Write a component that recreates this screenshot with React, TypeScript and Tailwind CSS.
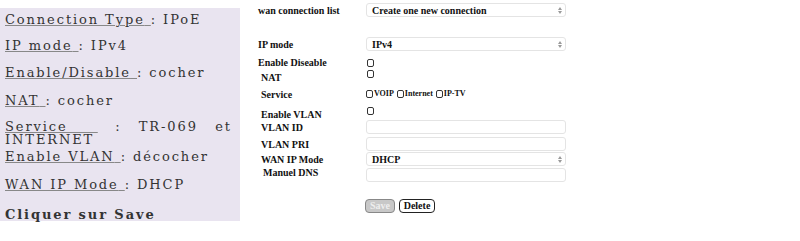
import React from "react";

const Arrow = () => (
  <svg width="4" height="7" viewBox="0 0 4 7" className="shrink-0">
    <path d="M0 3 L2 0 L4 3 Z M0 4 L2 7 L4 4 Z" fill="#999" />
  </svg>
);

const Select: React.FC<{ value: string }> = ({ value }) => (
  <div className="w-[200px] h-[14px] flex items-center justify-between pl-[5px] pr-[3px] border border-[#e4e4e4] rounded-[3px] bg-white text-[10px] font-bold text-[#111]">
    <span>{value}</span>
    <Arrow />
  </div>
);

const TextBox = () => (
  <div className="w-[200px] h-[14px] border border-[#e4e4e4] rounded-[3px] bg-white" />
);

const Box = () => (
  <span className="inline-block w-[7px] h-[8px] border border-[#333] rounded-[2px] bg-white" />
);

const Row: React.FC<{
  label: string;
  h: string;
  indent?: boolean;
  labelClass?: string;
  children?: React.ReactNode;
}> = ({ label, h, indent, labelClass = "", children }) => (
  <div className={`flex items-center ${h}`}>
    <div
      className={`w-[108px] text-[10px] font-bold text-[#111] ${indent ? "pl-[3px]" : ""} ${labelClass}`}
    >
      {label}
    </div>
    <div className="flex items-center">{children}</div>
  </div>
);

const Help: React.FC<{ label: string; value: string; mt: string }> = ({ label, value, mt }) => (
  <p className={`leading-[13px] ${mt}`}>
    <span className="underline decoration-[#888] whitespace-pre">{label} </span>
    <span>: {value}</span>
  </p>
);

export default function App() {
  return (
    <div className="w-[800px] h-[241px] bg-white flex font-['Liberation_Serif','Times_New_Roman',serif]">
      <div className="w-[240px] h-[213px] mt-[8px] bg-[#e9e4f0] pl-[5px] pr-[8px] pt-[4px] text-[13px] text-[#333] tracking-[1.9px] font-['DejaVu_Serif',serif]">
        <Help label="Connection Type" value="IPoE" mt="mt-[1px]" />
        <Help label="IP mode" value="IPv4" mt="mt-[13px]" />
        <Help label="Enable/Disable" value="cocher" mt="mt-[14px]" />
        <Help label="NAT" value="cocher" mt="mt-[15px]" />
        <div className="leading-[13px] mt-[13px]">
          <div className="flex justify-between">
            <span className="underline underline-offset-[1px] decoration-[#888] whitespace-pre">Service     </span>
            <span>:</span>
            <span>TR-069</span>
            <span>et</span>
          </div>
          <div>INTERNET</div>
        </div>
        <Help label="Enable VLAN" value="décocher" mt="mt-[4px]" />
        <Help label="WAN IP Mode" value="DHCP" mt="mt-[15px]" />
        <p className="leading-[13px] mt-[17px] font-bold">Cliquer sur Save</p>
      </div>

      <div className="ml-[18px] pt-[3px] flex flex-col">
        <Row label="wan connection list" h="h-[14px]">
          <Select value="Create one new connection" />
        </Row>
        <div className="h-[20px]" />
        <Row label="IP mode" h="h-[14px]">
          <Select value="IPv4" />
        </Row>
        <Row label="Enable Diseable" h="h-[12px] mt-[5px]">
          <span className="ml-[1px] mt-[2px] flex"><Box /></span>
        </Row>
        <Row label="NAT" h="h-[12px] mt-[1px]" indent labelClass="translate-y-[2px]">
          <span className="ml-[1px] -mt-[2px] flex"><Box /></span>
        </Row>
        <Row label="Service" h="h-[16px] mt-[5px]" indent>
          <span className="flex items-center gap-[1px] text-[8px] font-bold text-[#111]">
            <Box />
            <span className="mr-[2px]">VOIP</span>
            <Box />
            <span className="mr-[2px]">Internet</span>
            <Box />
            <span>IP-TV</span>
          </span>
        </Row>
        <Row label="Enable VLAN" h="h-[14px] mt-[3px]" indent labelClass="translate-y-[2px]">
          <span className="ml-[1px] -mt-[3px] flex"><Box /></span>
        </Row>
        <Row label="VLAN ID" h="h-[14px] mt-[1px]" indent>
          <TextBox />
        </Row>
        <Row label="VLAN PRI" h="h-[14px] mt-[3px]" indent>
          <TextBox />
        </Row>
        <Row label="WAN IP Mode" h="h-[14px] mt-[1px]" indent>
          <Select value="DHCP" />
        </Row>
        <div className="flex h-[14px] mt-[2px]">
          <div className="w-[108px] text-[10px] font-bold text-[#111] pl-[5px] leading-[10px]">
            Manuel DNS
          </div>
          <TextBox />
        </div>
        <div className="flex gap-[4px] ml-[107px] mt-[17px]">
          <button className="h-[14px] w-[30px] rounded-[4px] border border-[#888] bg-[#c8c8c8] text-[10px] font-bold text-[#eee] leading-none">
            Save
          </button>
          <button className="h-[14px] w-[36px] rounded-[4px] border border-[#222] bg-white text-[10px] font-bold text-[#111] leading-none">
            Delete
          </button>
        </div>
      </div>
    </div>
  );
}
